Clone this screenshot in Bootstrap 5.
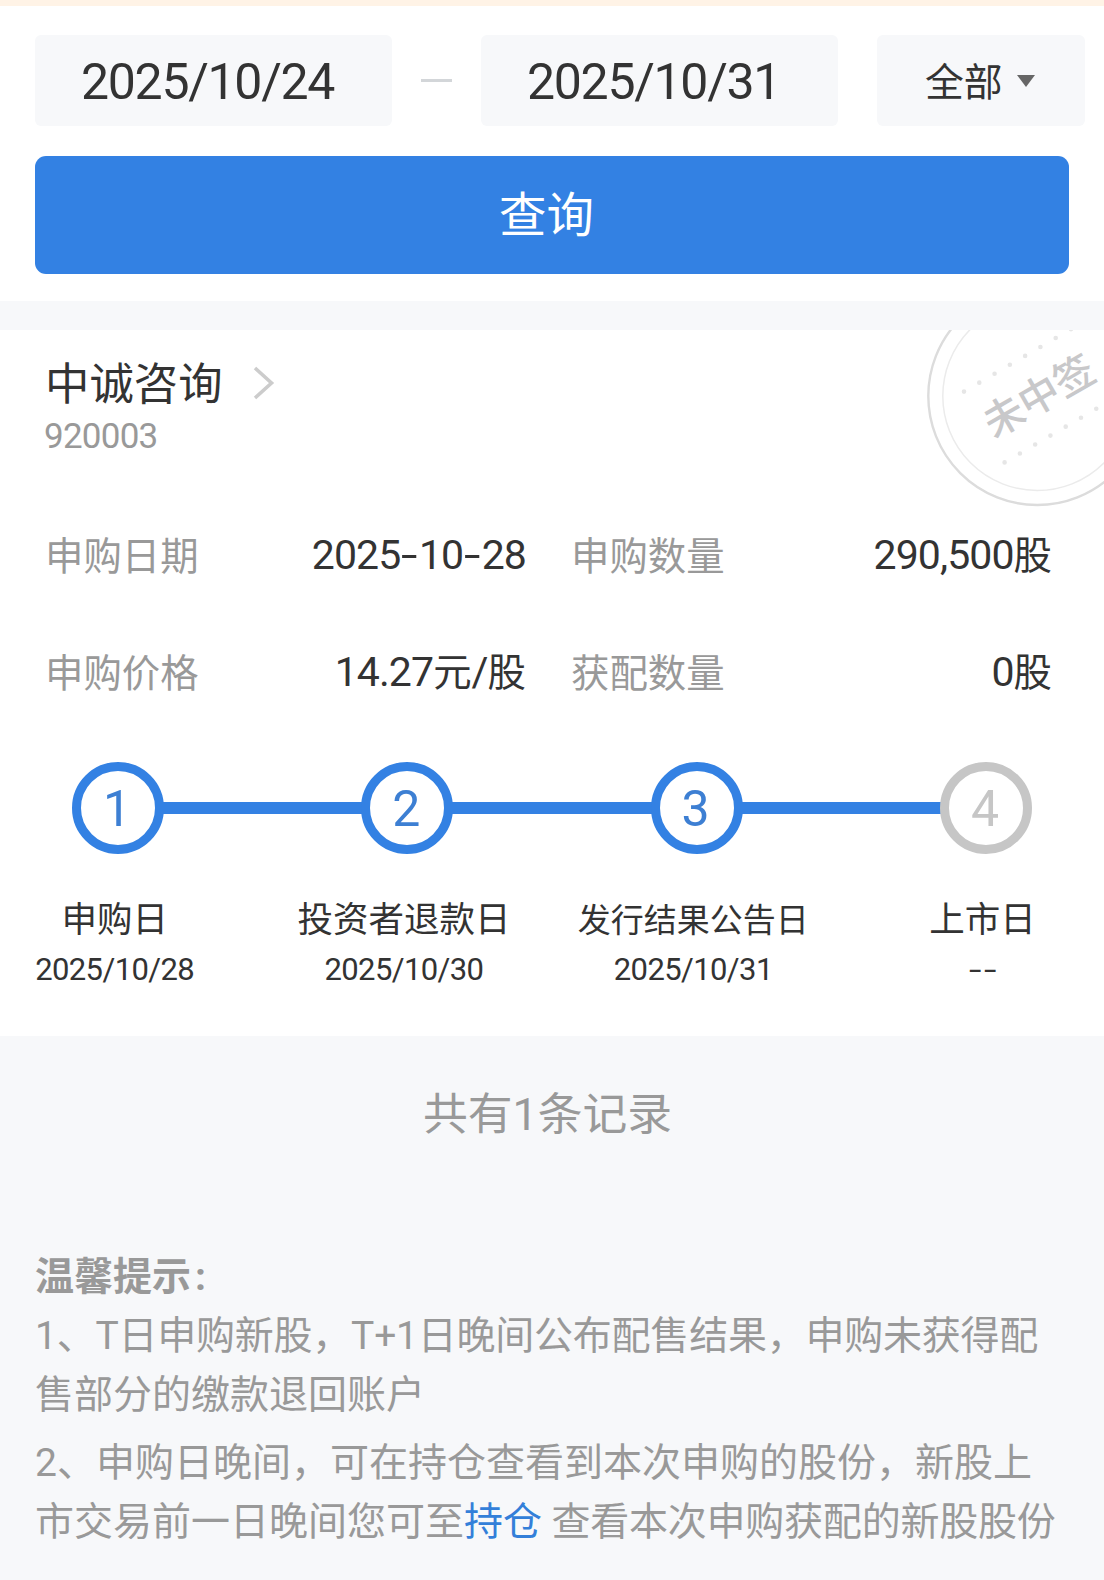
<!DOCTYPE html>
<html lang="zh-CN">
<head>
<meta charset="utf-8">
<meta name="viewport" content="width=device-width, initial-scale=1">
<title>新股申购查询</title>
<link href="https://cdn.jsdelivr.net/npm/bootstrap@5.3.0/dist/css/bootstrap.min.css" rel="stylesheet">
<style>
body{font-family:Roboto,"Noto Sans CJK SC",sans-serif;color:#333;background:#f7f8fa;width:1104px;overflow-x:hidden;white-space:nowrap}
.notice-strip{height:6px;background:#fff3e6}
.filters{height:295px;padding:29px 19px 0 35px}
.field-box{height:91px;background:#f7f8fa;border-radius:6px;line-height:95px}
.date-box{width:357px;padding-left:46px;font-size:50px;letter-spacing:-1.3px}
.dash{width:31px;height:3px;background:#d3d6d9;margin:0 29px}
.type-box{width:208px;margin-left:39px;font-size:38.8px;padding-left:48px}
.type-box span{padding-top:3px}
.caret{width:18px;height:12px;margin-left:14px}
.btn-query{width:1034px;height:118px;margin-top:30px;border-radius:11px;background:#3381e3;color:#fff;font-size:47.4px;line-height:118px;padding:1px 11px 0 0;border:0}
.btn-query:hover{background:#3381e3;color:#fff}
.record{height:706px;margin-top:29px;padding-top:25px}
.stock-name{font-size:44.4px;line-height:60px;padding-left:45px}
.chevron{margin:-4px 0 0 30px}
.stock-code{font-size:35px;line-height:43px;padding-left:44px;letter-spacing:-.75px;color:#999}
.stamp{right:0;top:0;width:184px;height:190px}
.facts{margin-top:39px;padding:0 52px 0 45px;column-gap:45px}
.fact{width:481px;height:117px;font-size:38.4px;line-height:117px}
.fact .name{color:#999;padding-top:1px}
.num{font-size:41px;letter-spacing:-.9px}
.hyphen{display:inline-block;width:18.5px;text-align:center;letter-spacing:0;transform:scaleX(1.45)}
.caption .hyphen{width:14.5px}
.steps{margin:31px 72px 0 72px}
.dot{width:92px;height:92px;border:9px solid #3381e3;border-radius:50%;font-size:50px;line-height:76px;color:#3d7fd3;padding-right:2px}
.dot.off{border-color:#c6c6c6;color:#c6c6c6}
.link-bar{height:12px;background:#3381e3;margin:0 -1px}
.captions{margin:37px 0 0 -30px}
.caption{width:289.3px}
.caption .t{font-size:35.5px;line-height:58px}
.caption .t.tight{font-size:33px;padding-top:1px;line-height:57px}
.caption .d{font-size:31px;line-height:42px;letter-spacing:-.6px}
.total{font-size:44.8px;line-height:60px;margin-top:49px;padding-right:9px;color:#999}
.tips{margin-top:103px;padding-left:35px;font-size:39px;line-height:59px;color:#999}
.tips p{margin:0 0 9px}
.snug{letter-spacing:-.23px}
.tips a{color:#337fd9;text-decoration:none}
</style>
</head>
<body>
<div class="notice-strip"></div>
<section class="filters bg-white">
  <div class="d-flex align-items-center">
    <div class="field-box date-box">2025/10/24</div>
    <div class="dash"></div>
    <div class="field-box date-box">2025/10/31</div>
    <div class="field-box type-box d-flex align-items-center"><span>全部</span><svg class="caret" viewBox="0 0 18 12"><path d="M0 0h18L9 12z" fill="#666"/></svg></div>
  </div>
  <button type="button" class="btn btn-query d-block">查询</button>
</section>

<section class="record bg-white position-relative overflow-hidden">
  <svg class="stamp position-absolute" viewBox="920 330 184 190">
    <circle cx="1037.3" cy="396" r="109" fill="none" stroke="#dcdcdc" stroke-width="2.4"/>
    <circle cx="1037.3" cy="396" r="94.5" fill="none" stroke="#ebebeb" stroke-width="1.5"/>
    <g stroke="#e6e6e6" stroke-width="4.6" stroke-linecap="round" fill="none">
      <path d="M964 391.6L1104 309.8" stroke-dasharray="0 17.7"/>
      <path d="M1004.6 462.4L1120 394.9" stroke-dasharray="0 17.7"/>
    </g>
    <text x="1039" y="410.500" transform="rotate(-30 1039 396)" text-anchor="middle" font-family="Noto Sans CJK SC, sans-serif" font-size="40.5" font-weight="500" fill="#c8c8ca">未中签</text>
  </svg>
  <div class="stock-name d-flex align-items-center">中诚咨询
    <svg class="chevron" width="22" height="34" viewBox="0 0 22 34"><path d="M2 2l16.500 15L2 32" fill="none" stroke="#ccc" stroke-width="3.6"/></svg>
  </div>
  <div class="stock-code">920003</div>

  <div class="facts d-flex flex-wrap">
    <div class="fact d-flex justify-content-between"><span class="name">申购日期</span><span class="num">2025<span class="hyphen">-</span>10<span class="hyphen">-</span>28</span></div>
    <div class="fact d-flex justify-content-between"><span class="name">申购数量</span><span><span class="num">290,500</span>股</span></div>
    <div class="fact d-flex justify-content-between"><span class="name">申购价格</span><span><span class="num">14.27</span>元<span class="num">/</span>股</span></div>
    <div class="fact d-flex justify-content-between"><span class="name">获配数量</span><span><span class="num">0</span>股</span></div>
  </div>

  <div class="steps d-flex align-items-center">
    <div class="dot flex-shrink-0 text-center">1</div><div class="link-bar flex-fill"></div>
    <div class="dot flex-shrink-0 text-center">2</div><div class="link-bar flex-fill"></div>
    <div class="dot flex-shrink-0 text-center">3</div><div class="link-bar flex-fill"></div>
    <div class="dot off flex-shrink-0 text-center">4</div>
  </div>
  <div class="captions d-flex text-center">
    <div class="caption flex-shrink-0"><div class="t">申购日</div><div class="d">2025/10/28</div></div>
    <div class="caption flex-shrink-0"><div class="t">投资者退款日</div><div class="d">2025/10/30</div></div>
    <div class="caption flex-shrink-0"><div class="t tight">发行结果公告日</div><div class="d">2025/10/31</div></div>
    <div class="caption flex-shrink-0"><div class="t">上市日</div><div class="d"><span class="hyphen">-</span><span class="hyphen">-</span></div></div>
  </div>
</section>

<div class="total text-center">共有1条记录</div>

<section class="tips">
  <div class="fw-bold">温馨提示<span class="ms-1">:</span></div>
  <p><span class="snug">1、T日申购新股，T+1日晚间公布配售结果，申购未获得配</span><br>售部分的缴款退回账户</p>
  <p>2、申购日晚间，可在持仓查看到本次申购的股份，新股上<br>市交易前一日晚间您可至<a href="#">持仓</a><span class="snug"> 查看本次申购获配的新股股份</span></p>
</section>
<script src="https://cdn.jsdelivr.net/npm/bootstrap@5.3.0/dist/js/bootstrap.bundle.min.js"></script>
</body>
</html>
